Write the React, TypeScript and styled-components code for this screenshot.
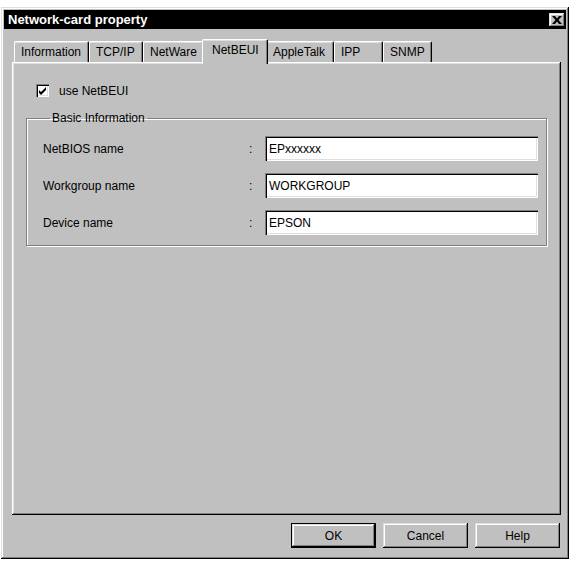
import React from "react";
import styled, { createGlobalStyle } from "styled-components";

const GlobalStyle = createGlobalStyle`
  html, body {
    margin: 0;
    padding: 0;
    background: #ffffff;
  }
  body {
    font-family: "Liberation Sans", Arial, sans-serif;
    font-size: 12px;
    color: #000;
  }
`;

const tabs = [
  { label: "Information", width: 75 },
  { label: "TCP/IP", width: 54 },
  { label: "NetWare", width: 61 },
  { label: "NetBEUI", width: 62 },
  { label: "AppleTalk", width: 68 },
  { label: "IPP", width: 49 },
  { label: "SNMP", width: 49 },
];

const fields = [
  { label: "NetBIOS name", value: "EPxxxxxx" },
  { label: "Workgroup name", value: "WORKGROUP" },
  { label: "Device name", value: "EPSON" },
];

const App = () => {
  return (
    <>
      <GlobalStyle />
      <Window>
        <TitleBar>
          <Title>Network-card property</Title>
          <CloseButton aria-label="Close">
            <svg width="10" height="8" viewBox="0 0 10 8">
              <path d="M0 0h3l2 2.5L7 0h3L6.5 4 10 8H7L5 5.5 3 8H0l3.5-4z" fill="#000" />
            </svg>
          </CloseButton>
        </TitleBar>
        <Body>
          <TabRow>
            {tabs.map((t) => (
              <Tab key={t.label} $w={t.width} $active={t.label === "NetBEUI"}>
                {t.label}
              </Tab>
            ))}
          </TabRow>
          <Panel>
            <CheckRow>
              <CheckBox>
                <svg width="8" height="8" viewBox="0 0 8 8">
                  <path d="M0 3l2 2 5-5v3L2 8 0 6z" fill="#000" />
                </svg>
              </CheckBox>
              <span>use NetBEUI</span>
            </CheckRow>
            <Group>
              <Legend>Basic Information</Legend>
              <FieldGrid>
                {fields.map((f) => (
                  <React.Fragment key={f.label}>
                    <FieldLabel>{f.label}</FieldLabel>
                    <Colon>:</Colon>
                    <TextBox>{f.value}</TextBox>
                  </React.Fragment>
                ))}
              </FieldGrid>
            </Group>
          </Panel>
          <ButtonRow>
            <Button $default>OK</Button>
            <Button>Cancel</Button>
            <Button>Help</Button>
          </ButtonRow>
        </Body>
      </Window>
    </>
  );
};

export default App;

const raised = `
  box-shadow: inset -1px -1px #000000, inset 1px 1px #dfdfdf,
    inset -2px -2px #808080, inset 2px 2px #ffffff;
`;

const Window = styled.div`
  margin: 7px 1px 0 1px;
  height: 552px;
  background: #c0c0c0;
  padding: 3px;
  box-sizing: border-box;
  display: flex;
  flex-direction: column;
  ${raised}
`;

const TitleBar = styled.div`
  height: 19px;
  background: #000000;
  display: flex;
  align-items: center;
  justify-content: space-between;
  padding: 0 1px 0 4px;
`;

const Title = styled.div`
  color: #ffffff;
  font-weight: bold;
  font-size: 13px;
`;

const CloseButton = styled.div`
  width: 16px;
  height: 14px;
  background: #c0c0c0;
  display: flex;
  align-items: center;
  justify-content: center;
  ${raised}
`;

const Body = styled.div`
  flex: 1;
  display: flex;
  flex-direction: column;
  padding: 10px 5px 8px 8px;
`;

const TabRow = styled.div`
  display: flex;
  align-items: flex-end;
  height: 23px;
  padding-left: 2px;
  position: relative;
  z-index: 1;
`;

const Tab = styled.div<{ $w: number; $active?: boolean }>`
  width: ${(p) => p.$w + (p.$active ? 4 : 0)}px;
  height: ${(p) => (p.$active ? 25 : 21)}px;
  margin: ${(p) => (p.$active ? "0 -2px -2px -2px" : "0")};
  box-sizing: border-box;
  background: #c0c0c0;
  border-top: 1px solid #ffffff;
  border-left: 1px solid #ffffff;
  border-right: 1px solid #000000;
  border-radius: 2px 2px 0 0;
  box-shadow: inset -1px 0 #808080, inset 0 1px #dfdfdf;
  padding: ${(p) => (p.$active ? "3px 0 0 9px" : "3px 0 0 6px")};
  position: relative;
  z-index: ${(p) => (p.$active ? 2 : 0)};
  white-space: nowrap;
`;

const Panel = styled.div`
  flex: 1;
  padding: 22px 14px 0 14px;
  box-shadow: inset -1px -1px #000000, inset 1px 1px #ffffff,
    inset -2px -2px #808080, inset 2px 2px #dfdfdf;
`;

const CheckRow = styled.div`
  display: flex;
  align-items: center;
  gap: 10px;
  margin-left: 10px;
  height: 13px;
`;

const CheckBox = styled.div`
  width: 13px;
  height: 13px;
  box-sizing: border-box;
  background: #ffffff;
  display: flex;
  align-items: center;
  justify-content: center;
  box-shadow: inset 1px 1px #808080, inset 2px 2px #000000,
    inset -1px -1px #ffffff, inset -2px -2px #dfdfdf;
`;

const Group = styled.fieldset`
  margin: 14px 0 0 0;
  padding: 10px 8px 10px 16px;
  border: 1px solid #808080;
  box-shadow: inset 1px 1px #ffffff, 1px 1px #ffffff;
`;

const Legend = styled.legend`
  padding: 0 2px;
  margin-left: 7px;
  line-height: 15px;
`;

const FieldGrid = styled.div`
  display: grid;
  grid-template-columns: 206px 16px 1fr;
  grid-auto-rows: 25px;
  row-gap: 12px;
  align-items: center;
`;

const FieldLabel = styled.div``;

const Colon = styled.div``;

const TextBox = styled.div`
  height: 25px;
  box-sizing: border-box;
  background: #ffffff;
  padding: 0 4px;
  display: flex;
  align-items: center;
  font-size: 12px;
  box-shadow: inset 1px 1px #808080, inset 2px 2px #000000,
    inset -1px -1px #ffffff, inset -2px -2px #dfdfdf;
`;

const ButtonRow = styled.div`
  display: flex;
  justify-content: flex-end;
  gap: 7px;
  margin-top: 8px;
  padding-right: 1px;
`;

const Button = styled.div<{ $default?: boolean }>`
  width: 85px;
  height: 25px;
  box-sizing: border-box;
  display: flex;
  align-items: center;
  justify-content: center;
  background: #c0c0c0;
  border: ${(p) => (p.$default ? "1px solid #000000" : "none")};
  ${raised}
`;
